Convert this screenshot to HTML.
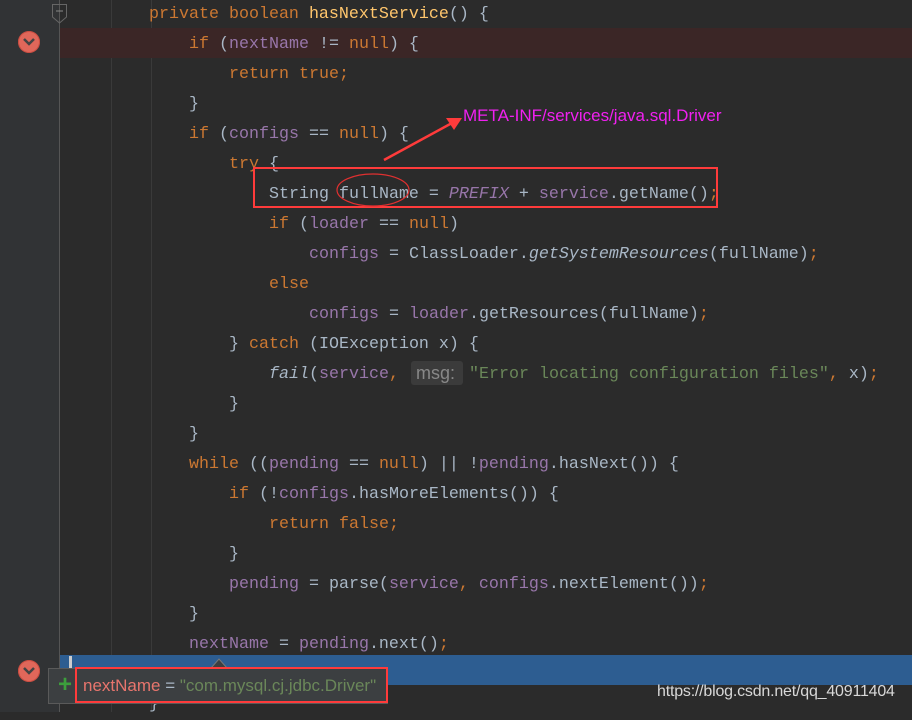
<!DOCTYPE html>
<html><head><meta charset="utf-8"><style>
*{margin:0;padding:0}
body{width:912px;height:712px;overflow:hidden;background:#2b2b2b;position:relative;font-family:"Liberation Mono",monospace;font-size:16.67px}
.g{position:absolute;left:0;top:0;width:59px;height:712px;background:#313335}
.gl{position:absolute;left:59px;top:0;width:1px;height:712px;background:#555}
.ig{position:absolute;top:0;width:1px;height:712px;background:#3a3a3a}
.c{position:absolute;left:0;top:2px;width:912px;height:712px}
.l{position:absolute;white-space:pre;color:#a9b7c6;line-height:30px;height:30px}
.k{color:#cc7832}.f{color:#9876aa}.s{color:#6a8759}.m{color:#ffc66d}.i{font-style:italic}
.bp{position:absolute;left:18px;width:22px;height:22px;border-radius:50%;background:#e0675a;box-shadow:inset 0 0 0 1px #c94c40}
.bp svg{position:absolute;left:4px;top:5px}
</style></head><body>
<div class="g"></div><div class="gl"></div>
<div class="ig" style="left:111px"></div><div class="ig" style="left:151px"></div>
<div style="position:absolute;left:60px;top:28px;width:852px;height:30px;background:#3b2626"></div>
<div style="position:absolute;left:60px;top:655px;width:852px;height:30px;background:#2d5d91"></div>
<div style="position:absolute;left:69px;top:656px;width:3px;height:28px;background:#ccc"></div>
<svg style="position:absolute;left:52px;top:4px" width="16" height="20"><path d="M0.5 0.5H14.5V13L7.5 19L0.5 13Z" fill="none" stroke="#666"/><path d="M4 7H11" stroke="#888"/></svg>
<div class="bp" style="top:31px"><svg width="14" height="12"><path d="M2 3L7 8L12 3" stroke="#444" stroke-width="2.5" fill="none"/></svg></div>
<div class="bp" style="top:660px"><svg width="14" height="12"><path d="M2 3L7 8L12 3" stroke="#444" stroke-width="2.5" fill="none"/></svg></div>
<div class="c">
<div class="l" style="left:149px;top:-2px"><span class="k">private boolean </span><span class="m">hasNextService</span>() {</div>
<div class="l" style="left:189px;top:28px"><span class="k">if </span>(<span class="f">nextName</span> != <span class="k">null</span>) {</div>
<div class="l" style="left:229px;top:58px"><span class="k">return true;</span></div>
<div class="l" style="left:189px;top:88px">}</div>
<div class="l" style="left:189px;top:118px"><span class="k">if </span>(<span class="f">configs</span> == <span class="k">null</span>) {</div>
<div class="l" style="left:229px;top:148px"><span class="k">try </span>{</div>
<div class="l" style="left:269px;top:178px">String fullName = <span class="f i">PREFIX</span> + <span class="f">service</span>.getName()<span class="k">;</span></div>
<div class="l" style="left:269px;top:208px"><span class="k">if </span>(<span class="f">loader</span> == <span class="k">null</span>)</div>
<div class="l" style="left:309px;top:238px"><span class="f">configs</span> = ClassLoader.<span class="i">getSystemResources</span>(fullName)<span class="k">;</span></div>
<div class="l" style="left:269px;top:268px"><span class="k">else</span></div>
<div class="l" style="left:309px;top:298px"><span class="f">configs</span> = <span class="f">loader</span>.getResources(fullName)<span class="k">;</span></div>
<div class="l" style="left:229px;top:328px">} <span class="k">catch </span>(IOException x) {</div>
<div class="l" style="left:269px;top:358px"><span class="i">fail</span>(<span class="f">service</span><span class="k">, </span></div>
<div class="l" style="left:469px;top:358px"><span class="s">"Error locating configuration files"</span><span class="k">, </span>x)<span class="k">;</span></div>
<div class="l" style="left:229px;top:388px">}</div>
<div class="l" style="left:189px;top:418px">}</div>
<div class="l" style="left:189px;top:448px"><span class="k">while </span>((<span class="f">pending</span> == <span class="k">null</span>) || !<span class="f">pending</span>.hasNext()) {</div>
<div class="l" style="left:229px;top:478px"><span class="k">if </span>(!<span class="f">configs</span>.hasMoreElements()) {</div>
<div class="l" style="left:269px;top:508px"><span class="k">return false;</span></div>
<div class="l" style="left:229px;top:538px">}</div>
<div class="l" style="left:229px;top:568px"><span class="f">pending</span> = parse(<span class="f">service</span><span class="k">, </span><span class="f">configs</span>.nextElement())<span class="k">;</span></div>
<div class="l" style="left:189px;top:598px">}</div>
<div class="l" style="left:189px;top:628px"><span class="f">nextName</span> = <span class="f">pending</span>.next()<span class="k">;</span></div>
<div class="l" style="left:149px;top:688px">}</div>
</div>
<div style="position:absolute;left:411px;top:361px;width:52px;height:24px;background:#3b3b3b;border-radius:3px;color:#888;font-family:'Liberation Sans',sans-serif;font-size:18px;line-height:24px;padding-left:5px;box-sizing:border-box">msg:</div>

<div style="position:absolute;left:48px;top:668px;width:340px;height:36px;background:#3c3f41;border:1px solid #5a5a5a;box-sizing:border-box"></div>
<svg style="position:absolute;left:210px;top:657px" width="18" height="12"><path d="M1 11L9 2L17 11" fill="#3c3f41" stroke="#777"/></svg>
<div style="position:absolute;left:58px;top:673px;color:#3c9e3c;font:bold 24px 'Liberation Sans',sans-serif;line-height:24px">+</div>
<div style="position:absolute;left:83px;top:674px;font:17px 'Liberation Sans',sans-serif;line-height:24px;white-space:pre"><span style="color:#e8756d">nextName</span><span style="color:#a9b7c6"> = </span><span style="color:#6a8759">"com.mysql.cj.jdbc.Driver"</span></div>
<div style="position:absolute;left:75px;top:667px;width:313px;height:36px;border:2px solid #ff3b3b;box-sizing:border-box"></div>

<div style="position:absolute;left:253px;top:167px;width:465px;height:41px;border:2px solid #ff3b3b;box-sizing:border-box"></div>
<svg style="position:absolute;left:0;top:0" width="912" height="712"><ellipse cx="373" cy="190" rx="36" ry="16" fill="none" stroke="#e03030" stroke-width="1.2"/><path d="M384 160L452 123" stroke="#ff3b3b" stroke-width="2.5"/><path d="M462 118L446 118L454 130Z" fill="#ff3b3b"/></svg>
<div style="position:absolute;left:463px;top:106px;color:#f020f0;font:17px 'Liberation Sans',sans-serif;white-space:pre">META-INF/services/java.sql.Driver</div>
<div style="position:absolute;left:657px;top:683px;color:#d8d8d8;font:16px 'Liberation Sans',sans-serif;white-space:pre;letter-spacing:-0.2px">https://blog.csdn.net/qq_40911404</div>
</body></html>
